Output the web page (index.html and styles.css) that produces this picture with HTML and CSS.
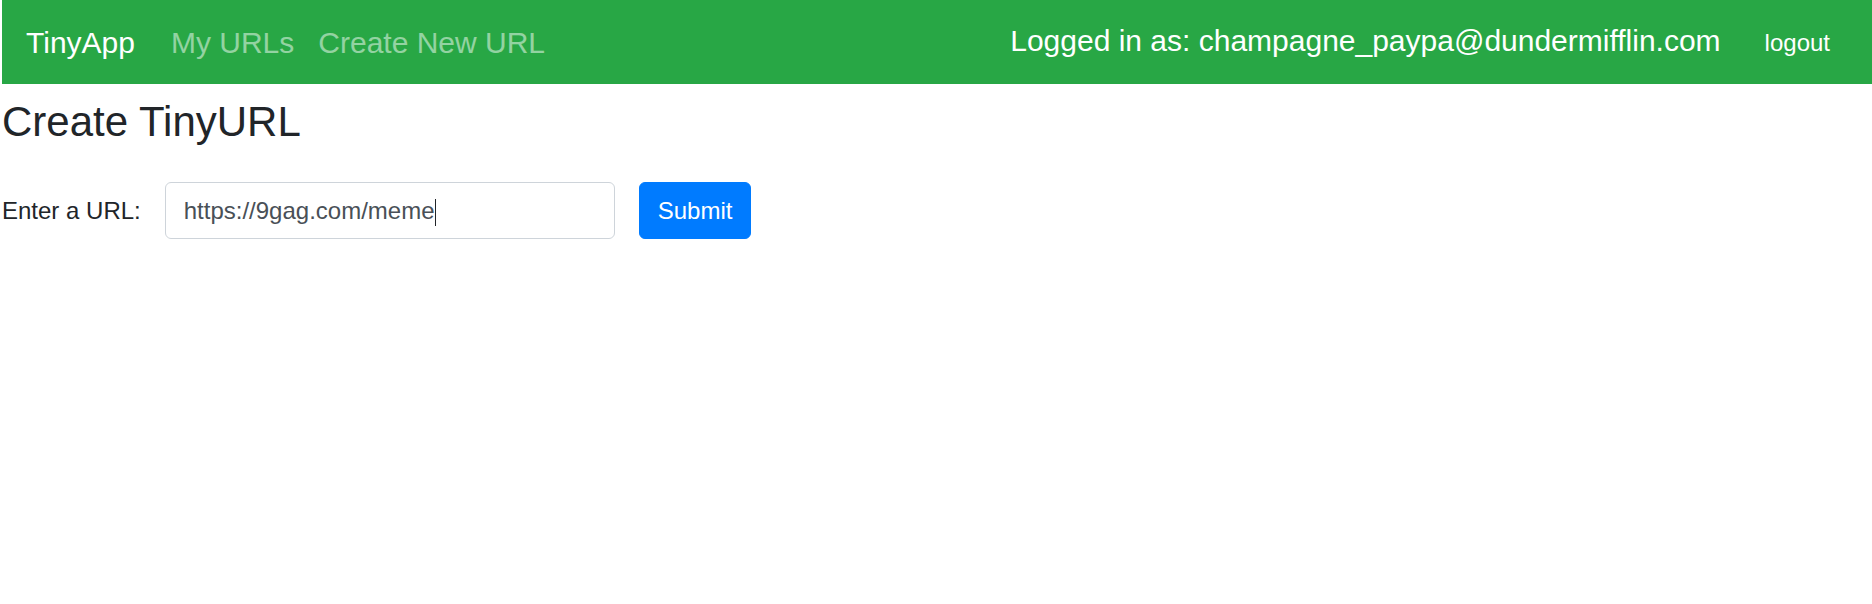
FILE: index.html
```html
<!DOCTYPE html>
<html lang="en">
<head>
<meta charset="utf-8">
<title>TinyApp</title>
<link rel="stylesheet" href="styles.css">
</head>
<body>
<nav class="navbar">
  <a class="brand" href="#">TinyApp</a>
  <ul class="nav-links">
    <li><a class="nav-link" href="#">My URLs</a></li>
    <li><a class="nav-link" href="#">Create New URL</a></li>
  </ul>
  <div class="user">
    <span class="user-label">Logged in as: champagne_paypa@dundermifflin.com</span>
    <form class="logout-form"><button type="button" class="btn-logout">logout</button></form>
  </div>
</nav>
<main class="content">
  <h3 class="title">Create TinyURL</h3>
  <form class="url-form">
    <label class="url-label" for="longURL">Enter a URL:</label>
    <div class="input-wrap">
      <input id="longURL" class="url-input" type="text" value="https://9gag.com/meme">
      <span class="caret"></span>
    </div>
    <button type="button" class="btn-submit">Submit</button>
  </form>
</main>
</body>
</html>
```
FILE: styles.css
```css
* { box-sizing: border-box; }

html, body {
  background: #fff;
}

body {
  margin: 0 0 0 2px;
  font-family: "Liberation Sans", Arial, sans-serif;
  color: #212529;
}

.navbar {
  display: flex;
  align-items: center;
  height: 84px;
  padding: 0 24px;
  background: #28a745;
}

.brand {
  font-size: 30px;
  line-height: 45px;
  color: #fff;
  text-decoration: none;
  margin-right: 24px;
}

.nav-links {
  display: flex;
  list-style: none;
  margin: 0;
  padding: 0;
}

.nav-link {
  display: block;
  padding: 0 12px;
  font-size: 30px;
  line-height: 45px;
  color: rgba(255, 255, 255, 0.5);
  text-decoration: none;
}

.user {
  margin-left: auto;
  display: flex;
  align-items: baseline;
  margin-bottom: 4px;
}

.user-label {
  font-size: 30px;
  line-height: 45px;
  color: #fff;
}

.logout-form {
  margin: 0 0 0 26px;
}

.btn-logout {
  font-family: "Liberation Sans", Arial, sans-serif;
  font-size: 24px;
  line-height: 36px;
  padding: 0 18px;
  background: transparent;
  border: none;
  color: #fff;
}

.content {
  padding: 0;
}

.title {
  margin: 13px 0 35px;
  font-size: 42px;
  line-height: 1.2;
  font-weight: 400;
  color: #212529;
}

.url-form {
  display: flex;
  align-items: center;
}

.url-label {
  font-size: 24px;
  line-height: 36px;
  margin-right: 24px;
  color: #212529;
}

.input-wrap {
  position: relative;
}

.url-input {
  display: block;
  width: 450px;
  height: 57px;
  padding: 0 18px;
  border: 1.5px solid #ced4da;
  border-radius: 6px;
  font-family: "Liberation Sans", Arial, sans-serif;
  font-size: 24px;
  color: #495057;
  background: #fff;
  outline: none;
}

.caret {
  position: absolute;
  left: 270px;
  top: 17px;
  width: 1.5px;
  height: 27px;
  background: #212529;
}

.btn-submit {
  margin-left: 24px;
  height: 57px;
  padding: 0 18px;
  font-family: "Liberation Sans", Arial, sans-serif;
  font-size: 24px;
  color: #fff;
  background: #007bff;
  border: 1.5px solid #007bff;
  border-radius: 6px;
}
```
